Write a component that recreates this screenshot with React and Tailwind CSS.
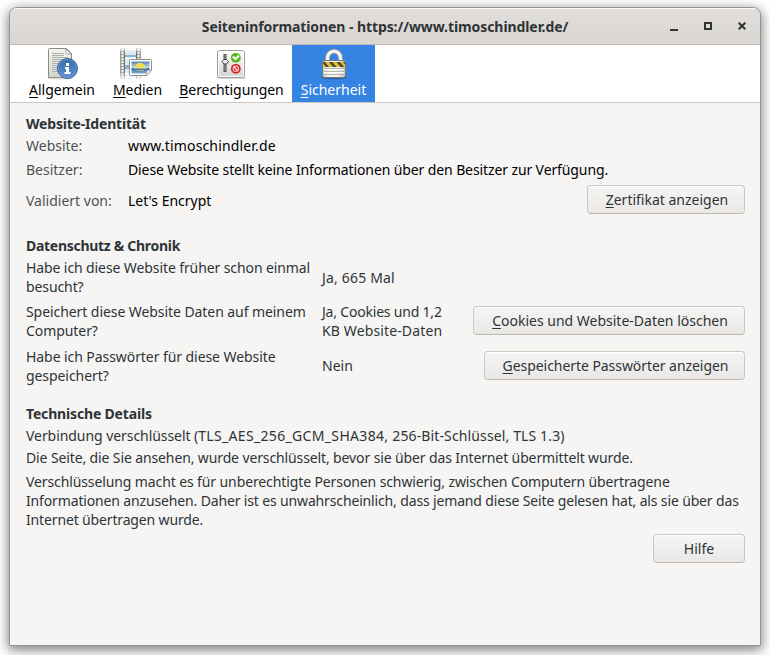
import React from 'react';

function DocumentInfoIcon() {
  return (
    <svg width="32" height="32" viewBox="0 0 32 32">
      <defs>
        <linearGradient id="paper" x1="0" y1="0" x2="0" y2="1">
          <stop offset="0" stopColor="#f4f4f1" />
          <stop offset="1" stopColor="#d2d4ce" />
        </linearGradient>
        <linearGradient id="info" x1="0" y1="0" x2="0" y2="1">
          <stop offset="0" stopColor="#3567a8" />
          <stop offset="1" stopColor="#5f94d4" />
        </linearGradient>
      </defs>
      <ellipse cx="14" cy="30" rx="13" ry="1.6" fill="#000" opacity=".13" />
      <path d="M3.5 .5H20.5L25.500 5.500V29.500H2.500V1.500Q2.500 .5 3.500 .5Z" fill="url(#paper)" stroke="#8b8d87" />
      <path d="M20 1L25 6H21Q20 6 20 5Z" fill="#fff" stroke="#8b8d87" strokeWidth=".8" />
      <path d="M6 5.500H18M6 7.500H18M6 9.500H22M6 11.500H22M6 13.500H22M6 15.500H22M6 17.500H20M6 19.500H20M6 21.500H16M6 23.500H16" stroke="#b0b2ac" />
      <circle cx="21.500" cy="20.500" r="10" fill="url(#info)" stroke="#2c5d9e" />
      <circle cx="21.500" cy="20.500" r="9" fill="none" stroke="#6e9bd1" strokeWidth=".8" />
      <path d="M20 15H23V18H20ZM19 19H23V24H24.500V26H18.500V24H20V21H19Z" fill="#fff" />
    </svg>
  );
}

function MediaIcon() {
  return (
    <svg width="34" height="32" viewBox="0 0 34 32">
      <defs>
        <linearGradient id="filmFade" x1="0" y1="0" x2="0" y2="1">
          <stop offset="0" stopColor="#fff" stopOpacity=".2" />
          <stop offset=".15" stopColor="#fff" />
          <stop offset=".75" stopColor="#fff" />
          <stop offset="1" stopColor="#fff" stopOpacity=".05" />
        </linearGradient>
        <linearGradient id="sky" x1="0" y1="0" x2="0" y2="1">
          <stop offset="0" stopColor="#4b7fbf" />
          <stop offset=".5" stopColor="#c6dcdf" />
          <stop offset=".56" stopColor="#2f67a8" />
          <stop offset="1" stopColor="#86aad0" />
        </linearGradient>
        <mask id="filmMask"><rect width="34" height="32" fill="url(#filmFade)" /></mask>
      </defs>
      <g mask="url(#filmMask)">
        <rect x="1" y="0" width="21" height="31" fill="#dfe9f2" />
        <path d="M6 7H17V9H6ZM6 17H17V21H6Z" fill="#8fb1d2" />
        <path d="M6 1.500H17M6 10.500H17M6 25.500H17" stroke="#fff" />
        <path d="M3.500 0V31M19.500 0V31" stroke="#9c9e98" strokeWidth="5" />
        <path d="M3.500 1V31M19.500 1V31" stroke="#f8f8f5" strokeWidth="2" strokeDasharray="2 1" />
        <path d="M5.500 0V31M17.500 0V31" stroke="#74776f" />
      </g>
      <path d="M11.500 11.500H31.500Q32.500 11.500 32.500 12.500V22L28 27.500H11.500Q10.500 27.500 10.500 26.500V12.500Q10.500 11.500 11.500 11.500Z" fill="#fff" stroke="#8c8e88" />
      <path d="M12.500 13.500H30.500V22L27 25.500H12.500Z" fill="url(#sky)" />
      <path d="M16 19.500A5 4.800 0 0 1 26 19.500Z" fill="#f1dd4b" />
      <path d="M15 20.500H28M18 22.500H25" stroke="#dfd65c" opacity=".65" />
      <path d="M27.500 27.500V23.500Q28 22 32.500 22Z" fill="#f5f5f2" stroke="#999b95" strokeWidth=".7" />
    </svg>
  );
}

function PermissionsIcon() {
  return (
    <svg width="32" height="32" viewBox="0 0 32 32">
      <defs>
        <linearGradient id="panel" x1="0" y1="0" x2="0" y2="1">
          <stop offset="0" stopColor="#fff" />
          <stop offset="1" stopColor="#d4d5d2" />
        </linearGradient>
      </defs>
      <rect x="1.500" y="28" width="29" height="3" rx="1.500" fill="#000" opacity=".15" />
      <rect x="2.500" y="2.500" width="27" height="27" rx="2.500" fill="url(#panel)" stroke="#9a9c98" />
      <rect x="3.500" y="3.500" width="25" height="25" rx="1.500" fill="none" stroke="#fff" />
      <path d="M10 6V24" stroke="#555753" strokeWidth="3" />
      <path d="M10 7V23" stroke="#92958f" />
      <path d="M7 13.500L9 11.500H11.500L13.500 13.500L11.500 16H9Z" fill="#eee" stroke="#41433f" />
      <circle cx="20.800" cy="9.800" r="4.900" fill="#55b51c" />
      <path d="M17.800 8.500L20.500 11L24 7.500" stroke="#f1ffe8" strokeWidth="2.200" fill="none" />
      <circle cx="20.800" cy="20.800" r="4.900" fill="#dc2024" />
      <circle cx="20.800" cy="20.800" r="2.700" fill="none" stroke="#f8c0bd" strokeWidth="1.100" />
      <path d="M19 19L22.600 22.600" stroke="#fff" strokeWidth="1.300" />
    </svg>
  );
}

function LockIcon() {
  return (
    <svg width="32" height="32" viewBox="0 0 32 32">
      <defs>
        <linearGradient id="lockBody" x1="0" y1="0" x2="1" y2="0">
          <stop offset="0" stopColor="#bfc1ba" />
          <stop offset=".25" stopColor="#f6f6f4" />
          <stop offset=".7" stopColor="#efefec" />
          <stop offset="1" stopColor="#b9bbb4" />
        </linearGradient>
        <clipPath id="stripe"><rect x="5" y="14" width="22" height="5" /></clipPath>
      </defs>
      <ellipse cx="16" cy="29.500" rx="13" ry="1.800" opacity=".25" />
      <path d="M9.500 14V10A6.500 6.800 0 0 1 22.500 10V14" fill="none" stroke="#8b8e87" strokeWidth="5" />
      <path d="M9.500 14V10A6.500 6.800 0 0 1 22.500 10V14" fill="none" stroke="#f4f5f2" strokeWidth="3.400" />
      <rect x="4.500" y="12.500" width="23" height="17" rx="2" fill="url(#lockBody)" stroke="#777a74" />
      <rect x="5" y="14" width="22" height="5" fill="#dfc033" />
      <path d="M4 14H7L11 19H8ZM11 14H14.500L18.500 19H15ZM18.500 14H22L26 19H22.500ZM25 14H27V16.500Z" fill="#4b4a32" clipPath="url(#stripe)" />
      <path d="M6 20.500H26M6 23.500H26M6 26.500H26" stroke="#b5b7b2" />
      <path d="M6 21.500H26M6 24.500H26" stroke="#fff" />
    </svg>
  );
}

function AccessLabel({ children }) {
  return (
    <span>
      <span className="underline decoration-1 underline-offset-2">{children[0]}</span>
      {children.slice(1)}
    </span>
  );
}

function Tab({ icon, label, className, iconClass = '' }) {
  return (
    <button className={`flex h-[57px] flex-col items-center pt-[3px] ${className}`}>
      <span className={`flex h-8 shrink-0 ${iconClass}`}>{icon}</span>
      <span className="whitespace-nowrap"><AccessLabel>{label}</AccessLabel></span>
    </button>
  );
}

function Button({ label, className, plain }) {
  return (
    <button className={`flex h-[29px] shrink-0 items-center justify-center whitespace-nowrap rounded-[4px] border border-[#cdc7c2] border-b-[#bfb8b1] bg-gradient-to-b from-[#f6f5f4] to-[#eae8e6] text-[#2e3436] shadow-[inset_0_1px_#fff] ${className}`}>
      {plain ? label : <AccessLabel>{label}</AccessLabel>}
    </button>
  );
}

export default function App() {
  return (
    <div className="h-[655px] w-[770px] overflow-hidden bg-white pt-[7px] pl-[9px] font-['Noto_Sans','Open_Sans',sans-serif] text-[14px] leading-[19px] text-[#2e3436]">
      <main className="h-[639px] w-[752px] overflow-hidden rounded-t-[8px] border border-[#929595] bg-[#f6f5f4] shadow-[0_3px_12px_1px_rgba(0,0,0,0.5)]">
        <header className="flex h-[37px] items-center border-b border-[#bfb8b1] bg-gradient-to-b from-[#e1dedb] to-[#dad6d2] shadow-[inset_0_1px_#f8f7f6]">
          <h1 className="ml-[90px] flex-1 text-center font-bold tracking-[-0.08px]">Seiteninformationen - https://www.timoschindler.de/</h1>
          <div className="mr-[13px] flex w-[77px] justify-between text-[#2e3436]">
            <svg width="9" height="9" viewBox="0 0 9 9"><path d="M0 7H8V9H0Z" fill="currentColor" /></svg>
            <svg width="9" height="9" viewBox="0 0 9 9"><path d="M1 1H7V7H1Z" fill="none" stroke="currentColor" strokeWidth="2" /></svg>
            <svg width="9" height="9" viewBox="0 0 9 9"><path d="M.7 .7L7.300 7.300M7.300 .7L.7 7.300" stroke="currentColor" strokeWidth="2" /></svg>
          </div>
        </header>
        <nav className="flex h-[58px] border-b border-[#cdc7c2] bg-white pl-[10px] text-black">
          <Tab icon={<DocumentInfoIcon />} label="Allgemein" className="w-[84px]" />
          <Tab icon={<MediaIcon />} label="Medien" className="w-[67px] tracking-[-0.05px]" iconClass="mr-[3px]" />
          <Tab icon={<PermissionsIcon />} label="Berechtigungen" className="w-[121px] tracking-[-0.08px]" iconClass="mr-[1px]" />
          <Tab icon={<LockIcon />} label="Sicherheit" className="w-[83px] bg-[#3584e4] text-white" />
        </nav>
        <section className="flex flex-col pt-[11px] pr-[15px] pl-4">
          <h2 className="font-bold tracking-[-0.19px]">Website-Identität</h2>
          <div className="mt-[3px] flex text-black">
            <span className="w-[102px] text-[#4c5254]">Website:</span>
            <span className="tracking-[0.15px]">www.timoschindler.de</span>
          </div>
          <div className="mt-[5px] flex text-black">
            <span className="w-[102px] text-[#4c5254]">Besitzer:</span>
            <span className="tracking-[-0.11px]">Diese Website stellt keine Informationen über den Besitzer zur Verfügung.</span>
          </div>
          <div className="mt-[6px] flex text-black">
            <span className="mt-[6px] w-[102px] text-[#4c5254]">Validiert von:</span>
            <span className="mt-[6px] flex-1">Let's Encrypt</span>
            <Button label="Zertifikat anzeigen" className="w-[158px] pl-[2px]" />
          </div>

          <h2 className="mt-[22px] font-bold tracking-[-0.29px]">Datenschutz &amp; Chronik</h2>
          <div className="mt-[3px] flex items-center">
            <p className="w-[296px] tracking-[-0.1px]">Habe ich diese Website früher schon einmal<br />besucht?</p>
            <p className="tracking-[0.18px]">Ja, 665 Mal</p>
          </div>
          <div className="mt-[6px] flex h-[38px] items-center">
            <p className="w-[296px] tracking-[-0.07px]">Speichert diese Website Daten auf meinem<br />Computer?</p>
            <p className="flex-1"><span className="tracking-[-0.2px]">Ja, Cookies und 1,2</span><br /><span className="tracking-[0.13px]">KB Website-Daten</span></p>
            <Button label="Cookies und Website-Daten löschen" className="mb-px w-[272px] pl-[2px]" />
          </div>
          <div className="mt-[7px] flex h-[38px] items-center">
            <p className="w-[296px] tracking-[-0.07px]">Habe ich Passwörter für diese Website<br />gespeichert?</p>
            <p className="mb-px flex-1">Nein</p>
            <Button label="Gespeicherte Passwörter anzeigen" className="mb-px w-[261px] pl-[2px] tracking-[-0.06px]" />
          </div>

          <h2 className="mt-[19px] font-bold tracking-[-0.17px]">Technische Details</h2>
          <p className="mt-[3px] whitespace-nowrap tracking-[0.13px]">
            <span className="tracking-[-0.06px]">Verbindung verschlüsselt (</span>
            <span className="tracking-[0.33px]">TLS_AES_256_GCM_SHA384,</span> 256-Bit-Schlüssel, TLS 1.3)
          </p>
          <p className="mt-[3px] tracking-[-0.12px]">Die Seite, die Sie ansehen, wurde verschlüsselt, bevor sie über das Internet übermittelt wurde.</p>
          <p className="mt-[5px] whitespace-nowrap tracking-[-0.147px]">
            <span className="tracking-[-0.11px]">Verschlüsselung macht es für unberechtigte Personen schwierig, zwischen Computern übertragene</span><br />
            Informationen anzusehen. Daher ist es unwahrscheinlich, dass jemand diese Seite gelesen hat, als sie über das<br />
            Internet übertragen wurde.
          </p>
          <Button plain label="Hilfe" className="mt-[5px] w-[92px] self-end" />
        </section>
      </main>
    </div>
  );
}
